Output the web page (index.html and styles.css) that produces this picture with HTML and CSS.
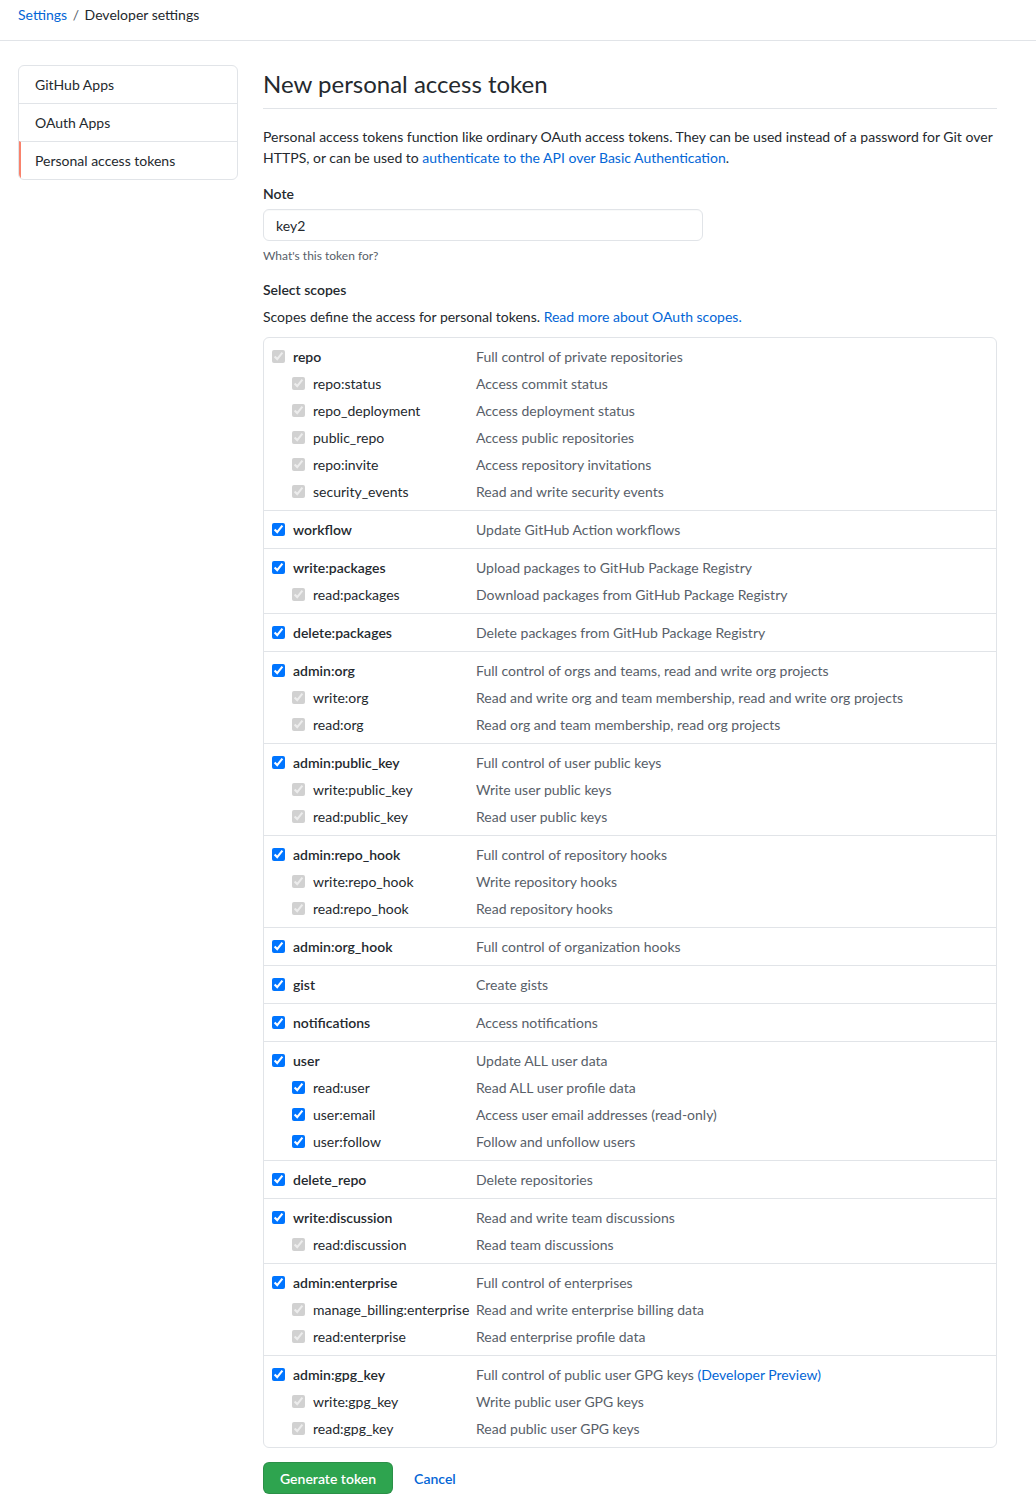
FILE: index.html
```html
<!DOCTYPE html>
<html lang="en">
<head>
<meta charset="UTF-8">
<meta name="viewport" content="width=device-width, initial-scale=1.0">
<title>New personal access token</title>
<link rel="stylesheet" href="styles.css">
</head>
<body>
<div class="crumbs">
    <a href="#">Settings</a> <span class="sep">/</span> Developer settings
</div>
<div class="page">
    <nav class="menu">
        <a href="#" class="menu-item">GitHub Apps</a>
        <a href="#" class="menu-item">OAuth Apps</a>
        <a href="#" class="menu-item selected">Personal access tokens</a>
    </nav>
    <main class="content">
        <h2 class="title">New personal access token</h2>
        <p class="intro">Personal access tokens function like ordinary OAuth access tokens. They can be used instead of a password for Git over HTTPS, or can be used to <a href="#">authenticate to the API over Basic Authentication</a>.</p>

        <label class="field-label" for="note">Note</label>
        <input type="text" id="note" class="note-input" value="key2">
        <p class="hint">What's this token for?</p>

        <div class="field-label scopes-label">Select scopes</div>
        <p class="scopes-desc">Scopes define the access for personal tokens. <a href="#">Read more about OAuth scopes.</a></p>

        <div class="scopes" id="scopes"></div>

        <div class="actions">
            <button class="btn-primary">Generate token</button>
            <a href="#" class="cancel">Cancel</a>
        </div>
    </main>
</div>
<script>
// scope groups: [name, description, state, children]
// state: 'on' = checked, 'dis' = checked but disabled
const groups = [
    ['repo', 'Full control of private repositories', 'dis', [
        ['repo:status', 'Access commit status'],
        ['repo_deployment', 'Access deployment status'],
        ['public_repo', 'Access public repositories'],
        ['repo:invite', 'Access repository invitations'],
        ['security_events', 'Read and write security events']
    ]],
    ['workflow', 'Update GitHub Action workflows', 'on', []],
    ['write:packages', 'Upload packages to GitHub Package Registry', 'on', [
        ['read:packages', 'Download packages from GitHub Package Registry']
    ]],
    ['delete:packages', 'Delete packages from GitHub Package Registry', 'on', []],
    ['admin:org', 'Full control of orgs and teams, read and write org projects', 'on', [
        ['write:org', 'Read and write org and team membership, read and write org projects'],
        ['read:org', 'Read org and team membership, read org projects']
    ]],
    ['admin:public_key', 'Full control of user public keys', 'on', [
        ['write:public_key', 'Write user public keys'],
        ['read:public_key', 'Read user public keys']
    ]],
    ['admin:repo_hook', 'Full control of repository hooks', 'on', [
        ['write:repo_hook', 'Write repository hooks'],
        ['read:repo_hook', 'Read repository hooks']
    ]],
    ['admin:org_hook', 'Full control of organization hooks', 'on', []],
    ['gist', 'Create gists', 'on', []],
    ['notifications', 'Access notifications', 'on', []],
    ['user', 'Update ALL user data', 'on', [
        ['read:user', 'Read ALL user profile data', 'on'],
        ['user:email', 'Access user email addresses (read-only)', 'on'],
        ['user:follow', 'Follow and unfollow users', 'on']
    ]],
    ['delete_repo', 'Delete repositories', 'on', []],
    ['write:discussion', 'Read and write team discussions', 'on', [
        ['read:discussion', 'Read team discussions']
    ]],
    ['admin:enterprise', 'Full control of enterprises', 'on', [
        ['manage_billing:enterprise', 'Read and write enterprise billing data'],
        ['read:enterprise', 'Read enterprise profile data']
    ]],
    ['admin:gpg_key', 'Full control of public user GPG keys <a href="#">(Developer Preview)</a>', 'on', [
        ['write:gpg_key', 'Write public user GPG keys'],
        ['read:gpg_key', 'Read public user GPG keys']
    ]]
];

function scopeRow(name, desc, state, sub) {
    const box = state === 'on' ? 'checked' : 'checked disabled';
    return `
        <div class="scope-row${sub ? ' sub' : ''}">
            <label class="scope-name"><input type="checkbox" ${box}>${name}</label>
            <span class="scope-desc">${desc}</span>
        </div>`;
}

const scopes = document.getElementById('scopes');
scopes.innerHTML = groups.map(([name, desc, state, children]) => {
    const rows = children.map(c => scopeRow(c[0], c[1], c[2] || 'dis', true)).join('');
    return `<div class="scope-group">${scopeRow(name, desc, state, false)}${rows}</div>`;
}).join('');
</script>
</body>
</html>
```
FILE: styles.css
```css
body {
    font-family: Lato, 'Noto Sans', sans-serif;
    font-size: 14px;
    color: #24292e;
    margin: 0;
    background: #fff;
}
a {
    color: #0366d6;
    text-decoration: none;
}
.crumbs {
    height: 41px;
    box-sizing: border-box;
    padding: 4px 18px 0;
    font-size: 14px;
    line-height: 21px;
    border-bottom: 1px solid #e1e4e8;
}
.crumbs .sep {
    color: #586069;
    margin: 0 2px;
}
.page {
    display: flex;
    align-items: flex-start;
    gap: 25px;
    padding: 24px 39px 40px 18px;
}
.menu {
    width: 218px;
    flex-shrink: 0;
    border: 1px solid #e1e4e8;
    border-radius: 6px;
    overflow: hidden;
}
.menu-item {
    display: block;
    height: 37px;
    line-height: 37px;
    padding: 0 16px;
    color: #24292e;
    border-top: 1px solid #e1e4e8;
}
.menu-item:first-child {
    border-top: none;
}
.menu-item.selected {
    border-left: 2px solid #f9826c;
    padding-left: 14px;
}
.content {
    flex: 1;
    min-width: 0;
}
.title {
    font-size: 24px;
    font-weight: 400;
    line-height: 36px;
    margin: 1px 0 0;
    padding-bottom: 6px;
    border-bottom: 1px solid #e1e4e8;
}
.intro {
    line-height: 21px;
    margin: 17px 0 0;
}
.field-label {
    display: block;
    font-weight: 600;
    line-height: 21px;
    margin-top: 15px;
}
.scopes-label {
    margin-top: 14px;
}
.note-input {
    display: block;
    width: 440px;
    height: 32px;
    box-sizing: border-box;
    margin-top: 5px;
    padding: 5px 12px;
    font: inherit;
    color: #24292e;
    border: 1px solid #e1e4e8;
    border-radius: 6px;
    box-shadow: inset 0 1px 0 rgba(225, 228, 232, 0.2);
}
.hint {
    font-size: 12px;
    color: #586069;
    margin: 6px 0 0;
    line-height: 18px;
}
.scopes-desc {
    line-height: 21px;
    margin: 6px 0 0;
}
.scopes {
    margin-top: 10px;
    border: 1px solid #e1e4e8;
    border-radius: 6px;
}
.scope-group {
    padding: 5px 8px 5px;
    border-top: 1px solid #e1e4e8;
}
.scope-group:first-child {
    border-top: none;
}
.scope-row {
    display: flex;
    height: 27px;
    align-items: center;
}
.scope-name {
    width: 204px;
    flex-shrink: 0;
    display: flex;
    align-items: center;
    font-weight: 600;
}
.scope-row.sub .scope-name {
    font-weight: 400;
    padding-left: 20px;
    width: 184px;
}
.scope-name input {
    width: 13px;
    height: 13px;
    margin: 0 8px 0 0;
}
.scope-desc {
    color: #586069;
}
.actions {
    display: flex;
    align-items: center;
    gap: 21px;
    margin-top: 14px;
}
.btn-primary {
    height: 32px;
    padding: 0 16px;
    font: inherit;
    font-weight: 600;
    color: #fff;
    background: #2ea44f;
    border: 1px solid rgba(27, 31, 35, 0.15);
    border-radius: 6px;
}
.cancel {
    font-weight: 600;
}
```
